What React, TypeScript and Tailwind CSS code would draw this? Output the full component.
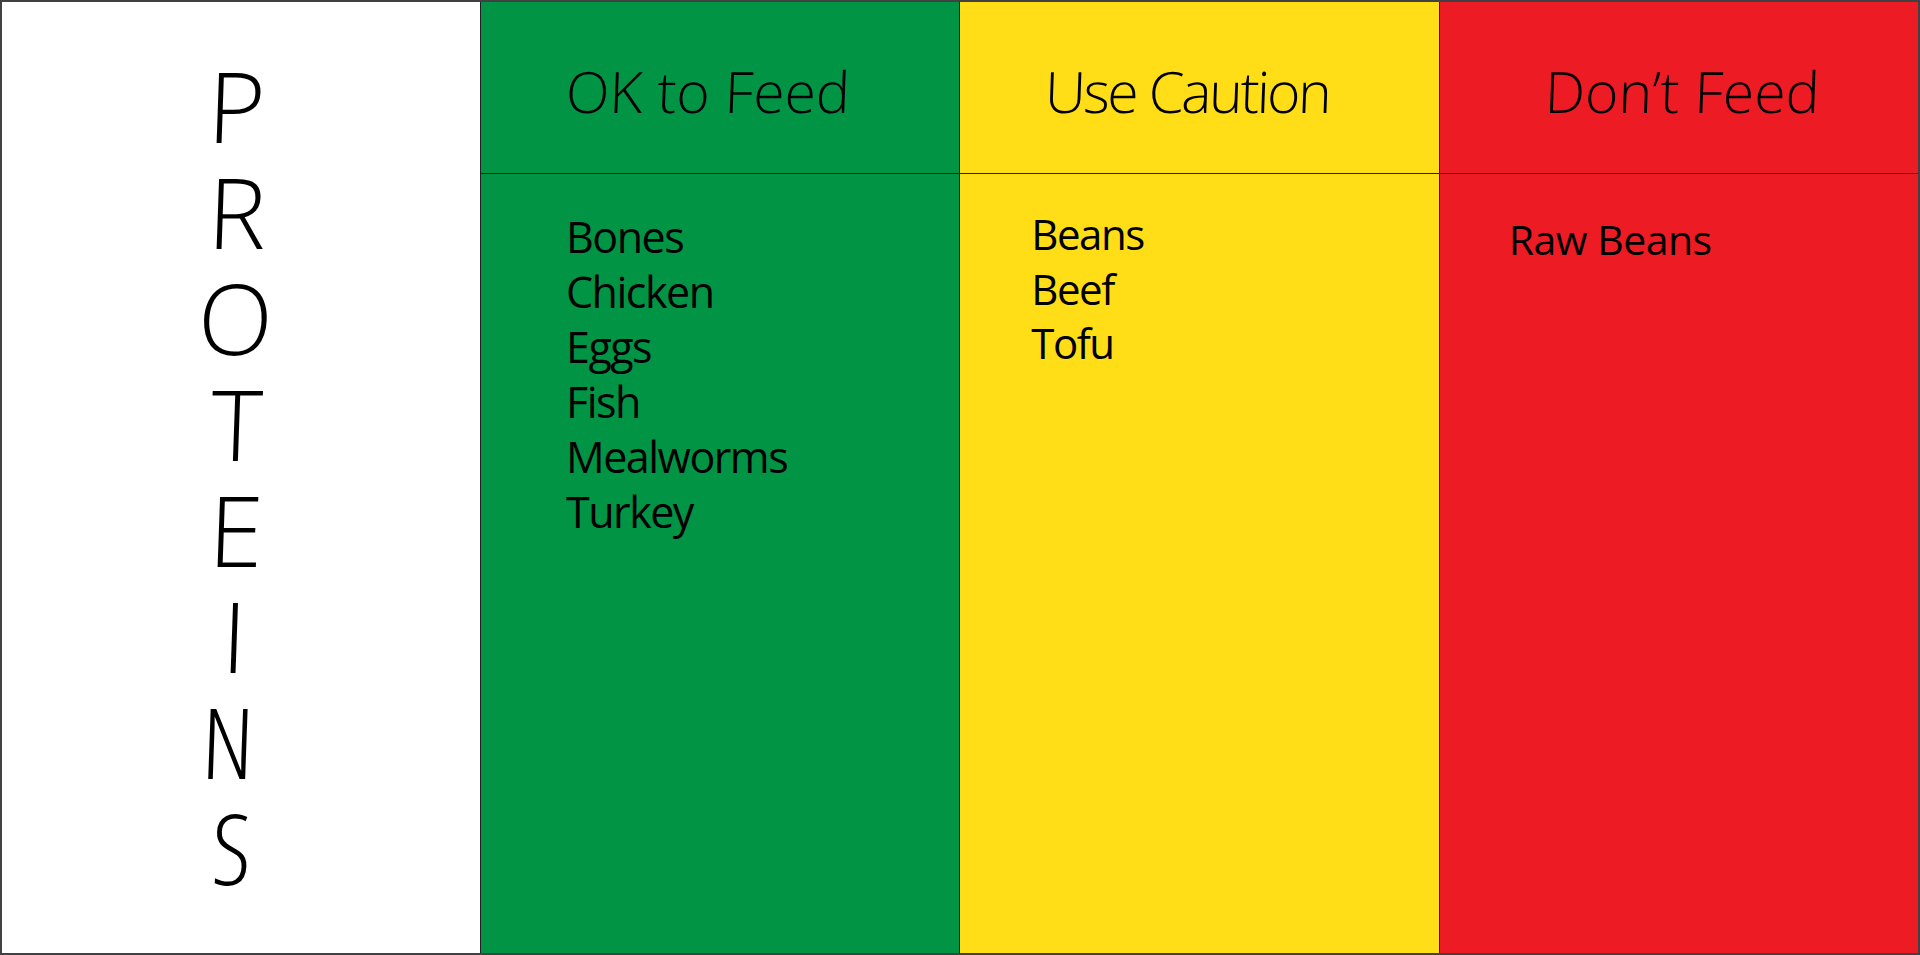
import React from 'react';

type Column = {
  title: string;
  titleCls: string;
  items: string[];
  bg: string;
  body: string;
};

const columns: Column[] = [
  {
    title: 'OK to Feed',
    titleCls: 'pr-[24px] font-stretch-[90%]',
    items: ['Bones', 'Chicken', 'Eggs', 'Fish', 'Mealworms', 'Turkey'],
    bg: 'bg-[#009444]',
    body: 'pt-[35px] pl-[85px] text-[43px] leading-[55px] font-stretch-[90%] tracking-[-1.5px]',
  },
  {
    title: 'Use Caution',
    titleCls: 'pr-[24px] font-stretch-[90%] tracking-[-2.5px]',
    items: ['Beans', 'Beef', 'Tofu'],
    bg: 'bg-[#ffde17]',
    body: 'pt-[33px] pl-[71px] text-[42px] leading-[54.5px] font-stretch-[90%] tracking-[-1.5px]',
  },
  {
    title: 'Don’t Feed',
    titleCls: 'pl-[6px] font-stretch-[92%]',
    items: ['Raw Beans'],
    bg: 'bg-[#ed1c24]',
    body: 'pt-[38px] pl-[69px] text-[41px] leading-[54.5px] font-stretch-[90%] tracking-[-0.5px]',
  },
];

// each letter gets its own width/offset so the stack reads like the original lettering
const letters: { ch: string; cls: string }[] = [
  { ch: 'P', cls: 'font-stretch-[90%]' },
  { ch: 'R', cls: 'font-stretch-[90%]' },
  { ch: 'O', cls: 'font-stretch-[100%] mr-[4px]' },
  { ch: 'T', cls: 'font-stretch-[100%]' },
  { ch: 'E', cls: 'font-stretch-[100%] mr-[2px]' },
  { ch: 'I', cls: 'font-stretch-[100%] mr-[6px]' },
  { ch: 'N', cls: 'font-stretch-[80%] mr-[18px]' },
  { ch: 'S', cls: 'font-stretch-[86%] mr-[10px]' },
];

export default function App() {
  return (
    <div className="h-[955px] w-[1920px] border-2 border-[#414042] flex bg-white text-black font-['Open_Sans',sans-serif]">
      {/* category label, one letter per line */}
      <div className="w-[478px] shrink-0 flex flex-col items-center pt-[50px] pr-[8px]">
        {letters.map((l, i) => (
          <span
            key={i}
            className={`block text-[98px] leading-[106px] font-light -skew-x-2 ${l.cls}`}
          >
            {l.ch}
          </span>
        ))}
      </div>

      <div className="flex-1 grid grid-cols-3">
        {columns.map((c) => (
          <div key={c.title} className={`flex flex-col border-l border-[#231f20] ${c.bg}`}>
            <div className={`h-[172px] shrink-0 flex items-center justify-center pt-[8px] border-b border-[#231f20] ${c.titleCls}`}>
              <span className="text-[57px] font-light -skew-x-2">
                {c.title}
              </span>
            </div>
            <div className={`flex flex-col ${c.body}`}>
              {c.items.map((it) => (
                <span key={it}>{it}</span>
              ))}
            </div>
          </div>
        ))}
      </div>
    </div>
  );
}
